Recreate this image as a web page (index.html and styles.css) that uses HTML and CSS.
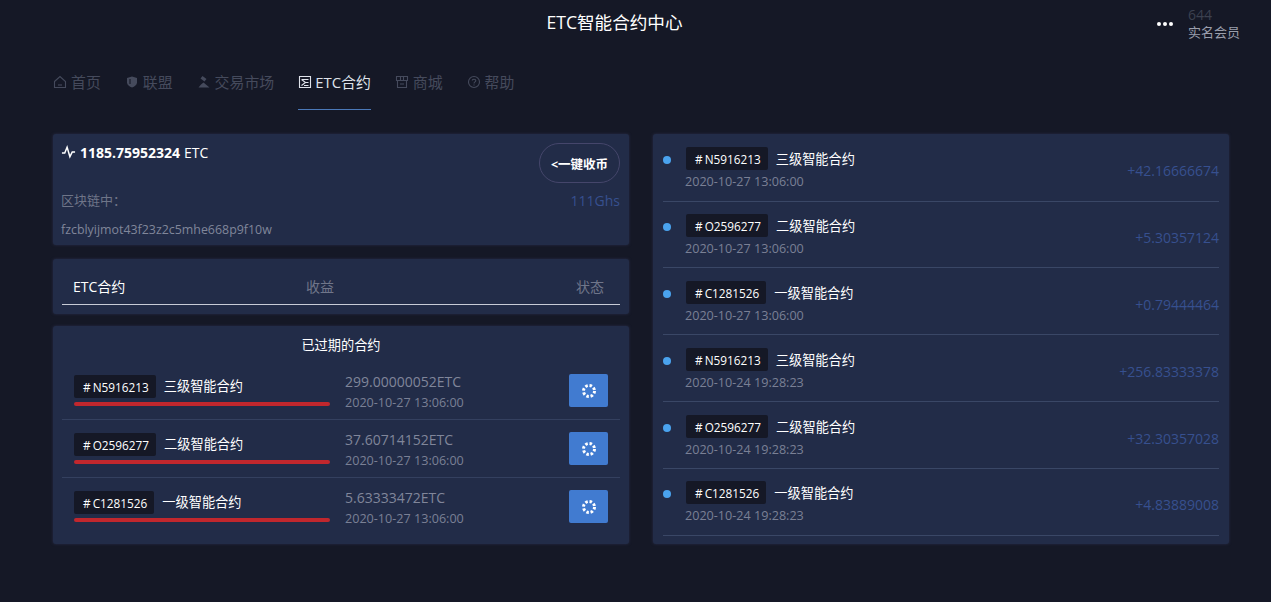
FILE: index.html
```html
<!DOCTYPE html>
<html lang="zh-CN">
  <head>
    <meta charset="UTF-8" />
    <title>ETC智能合约中心</title>
    <link rel="stylesheet" href="styles.css">
  </head>
  <body>
    <header class="top">
      <h1>ETC智能合约中心</h1>
      <div class="user">
        <span class="dots"><i></i><i></i><i></i></span>
        <div class="user-info">
          <div class="user-id">644</div>
          <div class="user-level">实名会员</div>
        </div>
      </div>
    </header>

    <nav class="tabs">
      <a class="tab">
        <svg viewBox="0 0 14 14"><path d="M1.500 6.500 7 1.500l5.500 5v6h-11z" /><path d="M5 10h4" /></svg>首页
      </a>
      <a class="tab">
        <svg viewBox="0 0 14 14"><path class="solid" d="M7 1.500 12 3v4.500c0 2.500-2.500 4-5 5-2.500-1-5-2.500-5-5V3z" /><path class="cut" d="M5 4v5" /></svg>联盟
      </a>
      <a class="tab">
        <svg viewBox="0 0 14 14"><path class="solid" d="M5.500 1 9.500 4 7.500 6.500 3.500 3.500zM6.500 7.500 12.500 12.500H1.500L4 9.500z" /></svg>交易市场
      </a>
      <a class="tab active">
        <svg viewBox="0 0 14 14"><path d="M1.500 1.500h11v11h-11z" /><path d="M3.500 4.500h7M3.500 4.500l4 3-4 3M7 7.500h3.500M6 10.500h4.500" /></svg>ETC合约
      </a>
      <a class="tab">
        <svg viewBox="0 0 14 14"><path d="M1.500 1.500h11v4h-11zM2.500 5.500v7h9v-7M5.500 1.500v4M8.500 1.500v4M5 9h4" /></svg>商城
      </a>
      <a class="tab">
        <svg viewBox="0 0 14 14"><circle cx="7" cy="7" r="5.500" /><path d="M5.300 5.600C5.300 3.700 8.800 3.700 8.800 5.600 8.800 7 7 6.900 7 8.500M7 9.500v1" /></svg>帮助
      </a>
    </nav>

    <main class="columns">
      <section class="left">
        <div class="card wallet">
          <div class="wallet-top">
            <div class="balance">
              <svg viewBox="0 0 16 14"><path d="M1 8h3l2.500-6 3 10L12 7h3" /></svg>
              <b>1185.75952324</b> ETC
            </div>
            <button class="collect">&lt;一键收币</button>
          </div>
          <div class="chain-row">
            <span>区块链中：</span>
            <span class="power">111Ghs</span>
          </div>
          <div class="address">fzcblyijmot43f23z2c5mhe668p9f10w</div>
        </div>

        <div class="card table-head">
          <div class="head-row">
            <span class="head-name">ETC合约</span>
            <span class="head-income">收益</span>
            <span class="head-state">状态</span>
          </div>
        </div>

        <div class="card expired">
          <h2>已过期的合约</h2>
          <div class="expired-row">
            <div class="expired-main">
              <div class="contract"><span class="code"># N5916213</span><span class="level">三级智能合约</span></div>
              <div class="bar"></div>
            </div>
            <div class="expired-income">
              <div class="amount">299.00000052ETC</div>
              <div class="date">2020-10-27 13:06:00</div>
            </div>
            <button class="state-btn"><svg viewBox="0 0 16 16"><circle cx="8" cy="8" r="5.500" /></svg></button>
          </div>
          <div class="expired-row">
            <div class="expired-main">
              <div class="contract"><span class="code"># O2596277</span><span class="level">二级智能合约</span></div>
              <div class="bar"></div>
            </div>
            <div class="expired-income">
              <div class="amount">37.60714152ETC</div>
              <div class="date">2020-10-27 13:06:00</div>
            </div>
            <button class="state-btn"><svg viewBox="0 0 16 16"><circle cx="8" cy="8" r="5.500" /></svg></button>
          </div>
          <div class="expired-row last">
            <div class="expired-main">
              <div class="contract"><span class="code"># C1281526</span><span class="level">一级智能合约</span></div>
              <div class="bar"></div>
            </div>
            <div class="expired-income">
              <div class="amount">5.63333472ETC</div>
              <div class="date">2020-10-27 13:06:00</div>
            </div>
            <button class="state-btn"><svg viewBox="0 0 16 16"><circle cx="8" cy="8" r="5.500" /></svg></button>
          </div>
        </div>
      </section>

      <section class="card right">
        <div class="log-row">
          <i class="dot"></i>
          <div class="log-main">
            <div class="contract"><span class="code"># N5916213</span><span class="level">三级智能合约</span></div>
            <div class="date">2020-10-27 13:06:00</div>
          </div>
          <span class="plus">+42.16666674</span>
        </div>
        <div class="log-row">
          <i class="dot"></i>
          <div class="log-main">
            <div class="contract"><span class="code"># O2596277</span><span class="level">二级智能合约</span></div>
            <div class="date">2020-10-27 13:06:00</div>
          </div>
          <span class="plus">+5.30357124</span>
        </div>
        <div class="log-row">
          <i class="dot"></i>
          <div class="log-main">
            <div class="contract"><span class="code"># C1281526</span><span class="level">一级智能合约</span></div>
            <div class="date">2020-10-27 13:06:00</div>
          </div>
          <span class="plus">+0.79444464</span>
        </div>
        <div class="log-row">
          <i class="dot"></i>
          <div class="log-main">
            <div class="contract"><span class="code"># N5916213</span><span class="level">三级智能合约</span></div>
            <div class="date">2020-10-24 19:28:23</div>
          </div>
          <span class="plus">+256.83333378</span>
        </div>
        <div class="log-row">
          <i class="dot"></i>
          <div class="log-main">
            <div class="contract"><span class="code"># O2596277</span><span class="level">二级智能合约</span></div>
            <div class="date">2020-10-24 19:28:23</div>
          </div>
          <span class="plus">+32.30357028</span>
        </div>
        <div class="log-row">
          <i class="dot"></i>
          <div class="log-main">
            <div class="contract"><span class="code"># C1281526</span><span class="level">一级智能合约</span></div>
            <div class="date">2020-10-24 19:28:23</div>
          </div>
          <span class="plus">+4.83889008</span>
        </div>
      </section>
    </main>
  </body>
</html>
```

FILE: styles.css
```css
* {
  box-sizing: border-box;
}

body {
  margin: 0;
  height: 602px;
  overflow: hidden;
  background: #151826;
  color: #fff;
  font-family: "Open Sans", "Noto Sans CJK SC", sans-serif;
  font-size: 13px;
}

.top {
  position: relative;
  height: 48px;
  display: flex;
  align-items: center;
  justify-content: center;
  padding: 0 42px 4px 0;
}

.top h1 {
  margin: 0;
  font-size: 17.600px;
  font-weight: 400;
  line-height: 44px;
}

.user {
  position: absolute;
  top: 6px;
  right: 31px;
  display: flex;
  align-items: center;
  gap: 15px;
}

.dots {
  display: flex;
  gap: 2px;
}

.dots i {
  width: 4px;
  height: 4px;
  border-radius: 50%;
  background: #fff;
}

.user-id {
  color: #3c4150;
  font-size: 14px;
  line-height: 17px;
}

.user-level {
  color: #9a9eac;
  font-size: 13px;
  line-height: 19px;
}

.tabs {
  display: flex;
  gap: 24px;
  margin: 14px 0 0 53px;
  height: 48px;
}

.tab {
  display: flex;
  align-items: flex-start;
  gap: 4px;
  height: 48px;
  padding-top: 9px;
  color: #454a5c;
  font-size: 14.900px;
  line-height: 22px;
}

.tab svg {
  width: 14px;
  height: 14px;
  margin-top: 4px;
  fill: none;
  stroke: currentColor;
  stroke-width: 1.100;
}

.tab svg .solid {
  fill: currentColor;
  stroke: none;
}

.tab svg .cut {
  stroke: #151826;
}

.tab.active {
  gap: 3px;
  color: #dfe2ea;
  border-bottom: 1px solid #4a78b8;
}

.columns {
  display: flex;
  gap: 24px;
  margin: 24px 42px 0 53px;
}

.left {
  width: 576px;
  display: flex;
  flex-direction: column;
}

.card {
  background: #222c48;
  border-radius: 3px;
  box-shadow: 0 0 3px #2a2d4a;
}

.wallet {
  height: 111px;
  padding: 7px 9px 0 8px;
}

.wallet-top {
  display: flex;
  justify-content: space-between;
  height: 50px;
}

.balance {
  display: flex;
  align-items: center;
  gap: 4px;
  height: 22px;
  font-size: 14px;
}

.balance svg {
  width: 15px;
  height: 14px;
  fill: none;
  stroke: #fff;
  stroke-width: 1.600;
}

.balance b {
  font-weight: 700;
}

.collect {
  width: 81px;
  height: 40px;
  margin-top: 2px;
  border: 1px solid #45466b;
  border-radius: 20px;
  background: none;
  color: #fff;
  font-family: inherit;
  font-size: 12.500px;
  font-weight: 700;
  padding: 1px 0 0;
}

.chain-row {
  display: flex;
  justify-content: space-between;
  color: #6f7588;
  line-height: 18px;
}

.power {
  margin-top: 1px;
  color: #37508f;
  font-size: 14px;
}

.address {
  margin-top: 11px;
  color: #80869a;
  font-size: 12.400px;
  line-height: 18px;
}

.table-head {
  height: 55px;
  margin-top: 14px;
  padding: 0 9px;
}

.head-row {
  height: 46px;
  display: flex;
  align-items: center;
  padding: 8px 16px 0 11px;
  border-bottom: 1px solid #c7cbd6;
  font-size: 14px;
}

.head-name {
  width: 233px;
}

.head-income,
.head-state {
  color: #70768a;
}

.head-state {
  margin-left: auto;
}

.expired {
  height: 218px;
  margin-top: 12px;
  padding: 0 9px;
}

.expired h2 {
  margin: 0;
  padding-top: 9px;
  height: 36px;
  font-size: 13.200px;
  font-weight: 400;
  line-height: 20px;
  text-align: center;
}

.expired-row {
  display: flex;
  align-items: center;
  height: 58px;
  padding: 0 12px;
  border-bottom: 1px solid #34405f;
}

.expired-row.last {
  border-bottom-color: transparent;
}

.expired-main {
  width: 271px;
}

.expired-main .bar {
  width: 256px;
  height: 4px;
  margin-top: 4px;
  border-radius: 2px;
  background: #c1272d;
}

.expired-income {
  flex: 1;
  padding-top: 2px;
}

.expired-income .date {
  margin-top: 2px;
}

.amount {
  color: #80869a;
  font-size: 14px;
  line-height: 20px;
}

.contract {
  display: flex;
  align-items: center;
}

.code {
  height: 23px;
  padding: 0 7px 0 9px;
  margin-right: 8px;
  background: #151826;
  border-radius: 2px;
  font-size: 11.800px;
  line-height: 24px;
  word-spacing: -1px;
}

.level {
  margin-top: -2px;
  font-size: 13.200px;
}

.date {
  color: #7a8095;
  font-size: 12.600px;
  line-height: 18px;
}

.state-btn {
  width: 39px;
  height: 33px;
  padding: 0;
  border: none;
  border-radius: 2px;
  background: #417bd0;
  display: flex;
  align-items: center;
  justify-content: center;
}

.state-btn svg {
  width: 16px;
  height: 16px;
  fill: none;
  stroke: #fff;
  stroke-width: 3;
  stroke-dasharray: 2.500 1.800;
}

.right {
  width: 576px;
  height: 410px;
  padding: 0.700px 10px 0;
}

.log-row {
  display: flex;
  align-items: flex-start;
  height: 66.900px;
  padding-top: 12.300px;
  border-bottom: 1px solid #3a4766;
}

.dot {
  width: 8px;
  height: 8px;
  margin-top: 9px;
  border-radius: 50%;
  background: #4aa3ee;
}

.log-main {
  flex: 1;
  margin-left: 15px;
}

.log-main .level {
  margin-top: 0;
}

.log-main .date {
  margin: 3px 0 0 -1px;
}

.plus {
  margin-top: 14px;
  color: #37508f;
  font-size: 14px;
  line-height: 20px;
}
```
